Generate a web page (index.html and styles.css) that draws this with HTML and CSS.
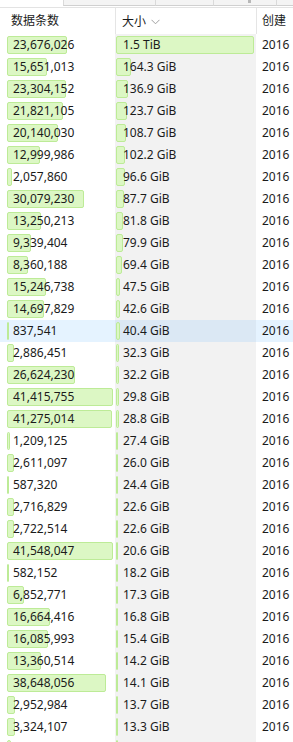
FILE: index.html
```html
<!DOCTYPE html>
<html lang="zh-CN">
<head>
    <meta charset="UTF-8">
    <title>列表</title>
    <link rel="stylesheet" href="styles.css">
</head>
<body>
<div class="toolbar">
    <div class="tb-blank"></div>
    <div class="tb-seg tb-a"></div>
    <div class="tb-seg tb-b"></div>
    <div class="tb-seg tb-c"><span class="tb-mark"></span></div>
    <div class="tb-seg tb-d"></div>
</div>
<div class="list">
    <div class="row head">
        <div class="cell c-count">数据条数</div>
        <div class="cell c-size">大小 <svg class="sort" width="9" height="6" viewBox="0 0 9 6"><path d="M0.5 0.8 L4.5 4.8 L8.5 0.8" fill="none" stroke="#a0a0a0" stroke-width="1"/></svg></div>
        <div class="cell c-date">创建</div>
    </div>

    <div class="row"><div class="cell c-count"><span class="bar" style="width:60px"></span><span class="txt">23,676,026</span></div><div class="cell c-size"><span class="bar" style="width:138px"></span><span class="txt">1.5 TiB</span></div><div class="cell c-date">2016</div></div>
    <div class="row"><div class="cell c-count"><span class="bar" style="width:40px"></span><span class="txt">15,651,013</span></div><div class="cell c-size"><span class="bar" style="width:15px"></span><span class="txt">164.3 GiB</span></div><div class="cell c-date">2016</div></div>
    <div class="row"><div class="cell c-count"><span class="bar" style="width:59px"></span><span class="txt">23,304,152</span></div><div class="cell c-size"><span class="bar" style="width:12px"></span><span class="txt">136.9 GiB</span></div><div class="cell c-date">2016</div></div>
    <div class="row"><div class="cell c-count"><span class="bar" style="width:56px"></span><span class="txt">21,821,105</span></div><div class="cell c-size"><span class="bar" style="width:11px"></span><span class="txt">123.7 GiB</span></div><div class="cell c-date">2016</div></div>
    <div class="row"><div class="cell c-count"><span class="bar" style="width:51px"></span><span class="txt">20,140,030</span></div><div class="cell c-size"><span class="bar" style="width:10px"></span><span class="txt">108.7 GiB</span></div><div class="cell c-date">2016</div></div>
    <div class="row"><div class="cell c-count"><span class="bar" style="width:33px"></span><span class="txt">12,999,986</span></div><div class="cell c-size"><span class="bar" style="width:9px"></span><span class="txt">102.2 GiB</span></div><div class="cell c-date">2016</div></div>
    <div class="row"><div class="cell c-count"><span class="bar" style="width:5px"></span><span class="txt">2,057,860</span></div><div class="cell c-size"><span class="bar" style="width:9px"></span><span class="txt">96.6 GiB</span></div><div class="cell c-date">2016</div></div>
    <div class="row"><div class="cell c-count"><span class="bar" style="width:77px"></span><span class="txt">30,079,230</span></div><div class="cell c-size"><span class="bar" style="width:8px"></span><span class="txt">87.7 GiB</span></div><div class="cell c-date">2016</div></div>
    <div class="row"><div class="cell c-count"><span class="bar" style="width:34px"></span><span class="txt">13,250,213</span></div><div class="cell c-size"><span class="bar" style="width:7px"></span><span class="txt">81.8 GiB</span></div><div class="cell c-date">2016</div></div>
    <div class="row"><div class="cell c-count"><span class="bar" style="width:24px"></span><span class="txt">9,339,404</span></div><div class="cell c-size"><span class="bar" style="width:7px"></span><span class="txt">79.9 GiB</span></div><div class="cell c-date">2016</div></div>
    <div class="row"><div class="cell c-count"><span class="bar" style="width:21px"></span><span class="txt">8,360,188</span></div><div class="cell c-size"><span class="bar" style="width:6px"></span><span class="txt">69.4 GiB</span></div><div class="cell c-date">2016</div></div>
    <div class="row"><div class="cell c-count"><span class="bar" style="width:39px"></span><span class="txt">15,246,738</span></div><div class="cell c-size"><span class="bar" style="width:4px"></span><span class="txt">47.5 GiB</span></div><div class="cell c-date">2016</div></div>
    <div class="row"><div class="cell c-count"><span class="bar" style="width:37px"></span><span class="txt">14,697,829</span></div><div class="cell c-size"><span class="bar" style="width:4px"></span><span class="txt">42.6 GiB</span></div><div class="cell c-date">2016</div></div>
    <div class="row hover"><div class="cell c-count"><span class="bar" style="width:2px"></span><span class="txt">837,541</span></div><div class="cell c-size"><span class="bar" style="width:4px"></span><span class="txt">40.4 GiB</span></div><div class="cell c-date">2016</div></div>
    <div class="row"><div class="cell c-count"><span class="bar" style="width:7px"></span><span class="txt">2,886,451</span></div><div class="cell c-size"><span class="bar" style="width:3px"></span><span class="txt">32.3 GiB</span></div><div class="cell c-date">2016</div></div>
    <div class="row"><div class="cell c-count"><span class="bar" style="width:68px"></span><span class="txt">26,624,230</span></div><div class="cell c-size"><span class="bar" style="width:3px"></span><span class="txt">32.2 GiB</span></div><div class="cell c-date">2016</div></div>
    <div class="row"><div class="cell c-count"><span class="bar" style="width:106px"></span><span class="txt">41,415,755</span></div><div class="cell c-size"><span class="bar" style="width:3px"></span><span class="txt">29.8 GiB</span></div><div class="cell c-date">2016</div></div>
    <div class="row"><div class="cell c-count"><span class="bar" style="width:105px"></span><span class="txt">41,275,014</span></div><div class="cell c-size"><span class="bar" style="width:3px"></span><span class="txt">28.8 GiB</span></div><div class="cell c-date">2016</div></div>
    <div class="row"><div class="cell c-count"><span class="bar" style="width:3px"></span><span class="txt">1,209,125</span></div><div class="cell c-size"><span class="bar" style="width:2px"></span><span class="txt">27.4 GiB</span></div><div class="cell c-date">2016</div></div>
    <div class="row"><div class="cell c-count"><span class="bar" style="width:7px"></span><span class="txt">2,611,097</span></div><div class="cell c-size"><span class="bar" style="width:2px"></span><span class="txt">26.0 GiB</span></div><div class="cell c-date">2016</div></div>
    <div class="row"><div class="cell c-count"><span class="bar" style="width:2px"></span><span class="txt">587,320</span></div><div class="cell c-size"><span class="bar" style="width:2px"></span><span class="txt">24.4 GiB</span></div><div class="cell c-date">2016</div></div>
    <div class="row"><div class="cell c-count"><span class="bar" style="width:7px"></span><span class="txt">2,716,829</span></div><div class="cell c-size"><span class="bar" style="width:2px"></span><span class="txt">22.6 GiB</span></div><div class="cell c-date">2016</div></div>
    <div class="row"><div class="cell c-count"><span class="bar" style="width:7px"></span><span class="txt">2,722,514</span></div><div class="cell c-size"><span class="bar" style="width:2px"></span><span class="txt">22.6 GiB</span></div><div class="cell c-date">2016</div></div>
    <div class="row"><div class="cell c-count"><span class="bar" style="width:106px"></span><span class="txt">41,548,047</span></div><div class="cell c-size"><span class="bar" style="width:2px"></span><span class="txt">20.6 GiB</span></div><div class="cell c-date">2016</div></div>
    <div class="row"><div class="cell c-count"><span class="bar" style="width:1px"></span><span class="txt">582,152</span></div><div class="cell c-size"><span class="bar" style="width:2px"></span><span class="txt">18.2 GiB</span></div><div class="cell c-date">2016</div></div>
    <div class="row"><div class="cell c-count"><span class="bar" style="width:17px"></span><span class="txt">6,852,771</span></div><div class="cell c-size"><span class="bar" style="width:2px"></span><span class="txt">17.3 GiB</span></div><div class="cell c-date">2016</div></div>
    <div class="row"><div class="cell c-count"><span class="bar" style="width:43px"></span><span class="txt">16,664,416</span></div><div class="cell c-size"><span class="bar" style="width:2px"></span><span class="txt">16.8 GiB</span></div><div class="cell c-date">2016</div></div>
    <div class="row"><div class="cell c-count"><span class="bar" style="width:41px"></span><span class="txt">16,085,993</span></div><div class="cell c-size"><span class="bar" style="width:2px"></span><span class="txt">15.4 GiB</span></div><div class="cell c-date">2016</div></div>
    <div class="row"><div class="cell c-count"><span class="bar" style="width:34px"></span><span class="txt">13,360,514</span></div><div class="cell c-size"><span class="bar" style="width:2px"></span><span class="txt">14.2 GiB</span></div><div class="cell c-date">2016</div></div>
    <div class="row"><div class="cell c-count"><span class="bar" style="width:99px"></span><span class="txt">38,648,056</span></div><div class="cell c-size"><span class="bar" style="width:2px"></span><span class="txt">14.1 GiB</span></div><div class="cell c-date">2016</div></div>
    <div class="row"><div class="cell c-count"><span class="bar" style="width:8px"></span><span class="txt">2,952,984</span></div><div class="cell c-size"><span class="bar" style="width:2px"></span><span class="txt">13.7 GiB</span></div><div class="cell c-date">2016</div></div>
    <div class="row"><div class="cell c-count"><span class="bar" style="width:8px"></span><span class="txt">3,324,107</span></div><div class="cell c-size"><span class="bar" style="width:2px"></span><span class="txt">13.3 GiB</span></div><div class="cell c-date">2016</div></div>
    <div class="row"><div class="cell c-count"><span class="bar" style="width:4px"></span><span class="txt">&nbsp;</span></div><div class="cell c-size"><span class="bar" style="width:2px"></span><span class="txt">&nbsp;</span></div><div class="cell c-date">&nbsp;</div></div>
</div>
</body>
</html>
```

FILE: styles.css
```css
* {
    margin: 0;
    padding: 0;
    box-sizing: border-box;
}

body {
    width: 293px;
    height: 742px;
    overflow: hidden;
    background: #fff;
    color: #1b1b1b;
    font-family: "Noto Sans", "Noto Sans CJK SC", sans-serif;
    font-size: 12px;
}

/* 顶部残留的工具栏 */
.toolbar {
    display: flex;
    height: 8px;
    border-bottom: 1px solid #e3e3e3;
}

.tb-blank {
    width: 63px;
}

.tb-seg {
    background: #f4f4f4;
    border-left: 1px solid #dadada;
    border-bottom: 1px solid #d0d0d0;
    margin-bottom: 1px;
}

.tb-a { width: 92px; }
.tb-b { width: 58px; }
.tb-c { width: 63px; display: flex; justify-content: center; }
.tb-d { flex: 1; }

.tb-mark {
    width: 3px;
    height: 3px;
    margin-left: 8px;
    background: #b8b8b8;
}

/* 列表 */
.row {
    display: grid;
    grid-template-columns: 115px 141px 1fr;
    height: 22px;
    line-height: 22px;
    white-space: nowrap;
}

.row.head {
    height: 26px;
    line-height: 25px;
}

.head .cell {
    border-left: 1px solid #e5e5e5;
}

.head .c-count {
    border-left: none;
    padding-left: 11px;
}

.head .c-size {
    padding-left: 6px;
    display: flex;
    align-items: center;
    gap: 5px;
}

.head .c-date {
    padding-left: 5px;
}

.sort {
    margin-top: 1px;
}

.cell {
    position: relative;
    overflow: hidden;
}

.c-count {
    padding-left: 13px;
}

.c-size {
    padding-left: 8px;
    background: #f2f2f2;
}

.row.head .c-size {
    background: #fff;
}

.c-date {
    padding-left: 6px;
}

.bar {
    position: absolute;
    top: 2px;
    height: 18px;
    background: #dcf7c4;
    border: 1px solid #bdeb97;
    border-radius: 2px;
}

.c-count .bar {
    left: 7px;
}

.c-size .bar {
    left: 1px;
}

.txt {
    position: relative;
}

.row.hover {
    background: #e5f3ff;
}

.row.hover .c-size {
    background: #dbe8f4;
}
```
